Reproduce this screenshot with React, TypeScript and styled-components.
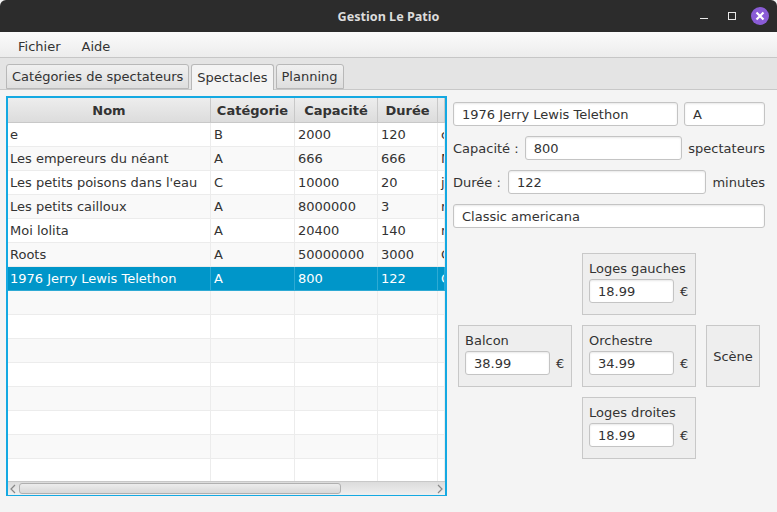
import React from 'react';
import styled, { createGlobalStyle } from 'styled-components';

const GlobalStyle = createGlobalStyle`
  html, body {
    margin: 0;
    padding: 0;
    background: #f4f4f4;
  }
  body {
    font-family: "DejaVu Sans", sans-serif;
    font-size: 13px;
    color: #333;
  }
`;

const Win = styled.div`
  width: 777px;
  height: 512px;
  display: flex;
  flex-direction: column;
  overflow: hidden;
  background: #f4f4f4;
  border-radius: 6px 6px 0 0;
`;

const TitleBar = styled.div`
  position: relative;
  flex: 0 0 32px;
  display: flex;
  align-items: center;
  justify-content: center;
  background: #2c2c2c;
  color: #dcdcdc;
  font-family: "Noto Sans", sans-serif;
  font-weight: 700;
  font-size: 12.6px;
`;

const WinButtons = styled.svg`
  position: absolute;
  right: 0;
  top: 0;
`;

const MenuBar = styled.div`
  flex: 0 0 26px;
  box-sizing: border-box;
  display: flex;
  align-items: center;
  gap: 21px;
  padding: 4px 18px 0;
  background: linear-gradient(#fbfbfb, #ececec);
  border-bottom: 1px solid #c6c6c6;
`;

const TabHeader = styled.div`
  flex: 0 0 32px;
  display: flex;
  align-items: flex-end;
  gap: 2px;
  padding-left: 6px;
  background: #e4e4e4;
  border-bottom: 1px solid #c8c8c8;
  box-sizing: border-box;
`;

const Tab = styled.div<{ $active?: boolean }>`
  height: ${(p) => (p.$active ? 26 : 25)}px;
  box-sizing: border-box;
  margin-bottom: ${(p) => (p.$active ? -1 : 0)}px;
  padding: 0 5px;
  display: flex;
  align-items: center;
  border: 1px solid #b8b8b8;
  border-bottom: ${(p) => (p.$active ? 'none' : '1px solid #b8b8b8')};
  border-radius: 3px 3px 0 0;
  background: ${(p) => (p.$active ? '#f4f4f4' : 'linear-gradient(#f0f0f0, #dedede)')};
`;

const Body = styled.div`
  flex: 1;
  display: flex;
  gap: 6px;
  padding: 6px 12px 16px 6px;
  min-height: 0;
`;

const TableFrame = styled.div`
  width: 441px;
  flex: none;
  box-sizing: border-box;
  border: 2px solid #14a9e2;
  border-bottom-width: 1px;
  display: flex;
  flex-direction: column;
  overflow: hidden;
  background: #fff;
`;

const columns = '203px 84px 83px 60px 1fr';

const HeaderRow = styled.div`
  flex: 0 0 25px;
  box-sizing: border-box;
  display: grid;
  grid-template-columns: ${columns};
  background: linear-gradient(#ededed, #dcdcdc);
  border-bottom: 1px solid #c8c8c8;
`;

const HeaderCell = styled.div`
  display: flex;
  align-items: center;
  justify-content: center;
  font-weight: 700;
  color: #333;
  border-right: 1px solid #c8c8c8;
  overflow: hidden;
  white-space: nowrap;
`;

const Rows = styled.div`
  flex: 1;
  overflow: hidden;
`;

const Row = styled.div<{ $odd: boolean; $selected?: boolean }>`
  height: 24px;
  box-sizing: border-box;
  display: grid;
  grid-template-columns: ${columns};
  background: ${(p) => (p.$selected ? '#0096c9' : p.$odd ? '#f9f9f9' : '#fff')};
  color: ${(p) => (p.$selected ? '#fff' : '#333')};
`;

const Cell = styled.div<{ $selected?: boolean }>`
  display: flex;
  align-items: center;
  padding-left: 3px;
  overflow: hidden;
  white-space: nowrap;
  border-right: 1px solid ${(p) => (p.$selected ? '#2eaad4' : '#ececec')};
  border-bottom: 1px solid ${(p) => (p.$selected ? '#2eaad4' : '#ececec')};

  &:first-child {
    padding-left: 2px;
  }
`;

const ScrollBar = styled.div`
  flex: 0 0 14px;
  box-sizing: border-box;
  display: flex;
  align-items: center;
  justify-content: space-between;
  padding: 0 1px;
  background: linear-gradient(#dcdcdc, #efefef);
  border-top: 1px solid #c8c8c8;
`;

const ScrollThumb = styled.div`
  width: 322px;
  height: 11px;
  box-sizing: border-box;
  margin: 0 auto 0 2px;
  border: 1px solid #b0b0b0;
  border-radius: 3px;
  background: linear-gradient(#ededed, #d8d8d8);
`;

const Side = styled.div`
  flex: 1;
  display: flex;
  flex-direction: column;
  gap: 10px;
  padding-top: 6px;
`;

const FormRow = styled.div`
  display: flex;
  align-items: center;
  gap: 6px;
`;

const Label = styled.span<{ $width?: number }>`
  flex: none;
  width: ${(p) => (p.$width ? `${p.$width}px` : 'auto')};
`;

const Field = styled.div<{ $width?: number; $grow?: boolean }>`
  height: 24px;
  box-sizing: border-box;
  width: ${(p) => (p.$width ? `${p.$width}px` : 'auto')};
  flex: ${(p) => (p.$grow ? 1 : 'none')};
  display: flex;
  align-items: center;
  padding-left: 8px;
  background: #fff;
  border: 1px solid #c4c4c4;
  border-radius: 3px;
  box-shadow: 0 1px 2px #e8e8e8 inset;
  white-space: nowrap;
`;

const Plan = styled.div`
  display: grid;
  grid-template-columns: 114px 114px 54px;
  grid-template-rows: repeat(3, 62px);
  gap: 10px 10px;
  margin: 15px 0 0 5px;
`;

const Zone = styled.div<{ $col: number; $row: number }>`
  grid-column: ${(p) => p.$col};
  grid-row: ${(p) => p.$row};
  box-sizing: border-box;
  background: #eeeeee;
  border: 1px solid #c8c8c8;
  padding: 7px 6px 0;
  display: flex;
  flex-direction: column;
  gap: 3px;
`;

const Stage = styled(Zone)`
  padding: 0;
  align-items: center;
  justify-content: center;
`;

const PriceRow = styled.div`
  display: flex;
  align-items: center;
  gap: 6px;
`;

const Title = () => (
  <TitleBar>
    Gestion Le Patio
    <WinButtons width="90" height="32" viewBox="687 0 90 32">
      <rect x="700" y="18" width="8" height="1" fill="#e8e8e8" />
      <rect x="728.5" y="12.5" width="7" height="7" fill="none" stroke="#e8e8e8" strokeWidth="1" />
      <circle cx="760" cy="16" r="9" fill="#8a5cd6" />
      <path d="M756.5 12.5 L763.5 19.5 M763.5 12.5 L756.5 19.5" stroke="#fff" strokeWidth="2.2" />
    </WinButtons>
  </TitleBar>
);

const data = [
  ['e', 'B', '2000', '120', 'c'],
  ['Les empereurs du néant', 'A', '666', '666', 'M'],
  ["Les petits poisons dans l'eau", 'C', '10000', '20', 'j'],
  ['Les petits cailloux', 'A', '8000000', '3', 'r'],
  ['Moi lolita', 'A', '20400', '140', 'r'],
  ['Roots', 'A', '50000000', '3000', 'C'],
  ['1976 Jerry Lewis Telethon', 'A', '800', '122', 'C'],
];

const rows = [...data, ...Array.from({ length: 8 }, () => ['', '', '', '', ''])];

const App = () => {
  return (
    <>
      <GlobalStyle />
      <Win>
        <Title />
        <MenuBar>
          <span>Fichier</span>
          <span>Aide</span>
        </MenuBar>
        <TabHeader>
          <Tab>Catégories de spectateurs</Tab>
          <Tab $active>Spectacles</Tab>
          <Tab>Planning</Tab>
        </TabHeader>
        <Body>
          <TableFrame>
            <HeaderRow>
              <HeaderCell>Nom</HeaderCell>
              <HeaderCell>Catégorie</HeaderCell>
              <HeaderCell>Capacité</HeaderCell>
              <HeaderCell>Durée</HeaderCell>
              <HeaderCell />
            </HeaderRow>
            <Rows>
              {rows.map((r, i) => (
                <Row key={i} $odd={i % 2 === 1} $selected={i === 6}>
                  {r.map((c, j) => (
                    <Cell key={j} $selected={i === 6}>{c}</Cell>
                  ))}
                </Row>
              ))}
            </Rows>
            <ScrollBar>
              <svg width="8" height="10" viewBox="0 0 8 10">
                <path d="M6 1 L2 5 L6 9" fill="none" stroke="#888" strokeWidth="1.2" />
              </svg>
              <ScrollThumb />
              <svg width="8" height="10" viewBox="0 0 8 10">
                <path d="M2 1 L6 5 L2 9" fill="none" stroke="#888" strokeWidth="1.2" />
              </svg>
            </ScrollBar>
          </TableFrame>
          <Side>
            <FormRow>
              <Field $grow>1976 Jerry Lewis Telethon</Field>
              <Field $width={81}>A</Field>
            </FormRow>
            <FormRow>
              <Label>Capacité :</Label>
              <Field $grow>800</Field>
              <Label>spectateurs</Label>
            </FormRow>
            <FormRow>
              <Label $width={49}>Durée :</Label>
              <Field $grow>122</Field>
              <Label>minutes</Label>
            </FormRow>
            <FormRow>
              <Field $grow>Classic americana</Field>
            </FormRow>
            <Plan>
              <Zone $col={2} $row={1}>
                Loges gauches
                <PriceRow><Field $width={85}>18.99</Field>€</PriceRow>
              </Zone>
              <Zone $col={1} $row={2}>
                Balcon
                <PriceRow><Field $width={85}>38.99</Field>€</PriceRow>
              </Zone>
              <Zone $col={2} $row={2}>
                Orchestre
                <PriceRow><Field $width={85}>34.99</Field>€</PriceRow>
              </Zone>
              <Stage $col={3} $row={2}>Scène</Stage>
              <Zone $col={2} $row={3}>
                Loges droites
                <PriceRow><Field $width={85}>18.99</Field>€</PriceRow>
              </Zone>
            </Plan>
          </Side>
        </Body>
      </Win>
    </>
  );
};

export default App;
